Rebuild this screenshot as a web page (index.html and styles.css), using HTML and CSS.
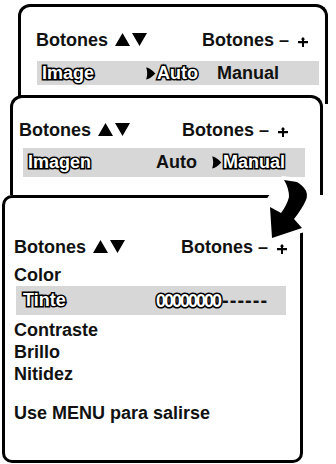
FILE: index.html
```html
<!DOCTYPE html>
<html lang="es">
<head>
    <meta charset="UTF-8">
    <meta name="viewport" content="width=device-width, initial-scale=1.0">
    <title>Menu de imagen</title>
    <link rel="stylesheet" href="styles.css">
</head>
<body>
    <div class="canvas">
        <!-- first screen -->
        <div class="panel panel-1">
            <div class="heading">
                <span>Botones <svg class="tri" viewBox="0 0 32 13"><path d="M7.5 0 L15 13 L0 13 Z M17 0 L32 0 L24.5 13 Z"/></svg></span>
                <span>Botones – <svg class="adj" viewBox="0 0 10 10"><path d="M5 0 L7.3 2.6 L6 2.6 L6 4 L10 4 L10 6.2 L6 6.2 L6 10 L4 10 L4 6.2 L0 6.2 L0 4 L4 4 L4 2.6 L2.7 2.6 Z"/></svg></span>
            </div>
            <div class="bar bar-1">
                <span class="sel">Image</span>
                <span><svg class="ptr" viewBox="0 0 10 12"><path d="M1 0.5 Q4 0.5 9.5 6 Q4 11.5 1 11.5 Q3 6 1 0.5 Z"/></svg><span class="sel">Auto</span></span>
                <span>Manual</span>
            </div>
        </div>

        <!-- second screen -->
        <div class="panel panel-2">
            <div class="heading">
                <span>Botones <svg class="tri" viewBox="0 0 32 13"><path d="M7.5 0 L15 13 L0 13 Z M17 0 L32 0 L24.5 13 Z"/></svg></span>
                <span>Botones – <svg class="adj" viewBox="0 0 10 10"><path d="M5 0 L7.3 2.6 L6 2.6 L6 4 L10 4 L10 6.2 L6 6.2 L6 10 L4 10 L4 6.2 L0 6.2 L0 4 L4 4 L4 2.6 L2.7 2.6 Z"/></svg></span>
            </div>
            <div class="bar bar-2">
                <span class="sel">Imagen</span>
                <span>Auto</span>
                <span><svg class="ptr" viewBox="0 0 10 12"><path d="M1 0.5 Q4 0.5 9.5 6 Q4 11.5 1 11.5 Q3 6 1 0.5 Z"/></svg><span class="sel">Manual</span></span>
            </div>
        </div>

        <!-- third screen -->
        <div class="panel panel-3">
            <div class="heading heading-3">
                <span>Botones <svg class="tri" viewBox="0 0 32 13"><path d="M7.5 0 L15 13 L0 13 Z M17 0 L32 0 L24.5 13 Z"/></svg></span>
                <span>Botones – <svg class="adj" viewBox="0 0 10 10"><path d="M5 0 L7.3 2.6 L6 2.6 L6 4 L10 4 L10 6.2 L6 6.2 L6 10 L4 10 L4 6.2 L0 6.2 L0 4 L4 4 L4 2.6 L2.7 2.6 Z"/></svg></span>
            </div>
            <div class="item">Color</div>
            <div class="bar bar-3">
                <span class="sel">Tinte</span>
                <span class="level"><span class="sel fill">00000000</span><span class="rest">------</span></span>
            </div>
            <div class="item item-first">Contraste</div>
            <div class="item">Brillo</div>
            <div class="item">Nitidez</div>
            <div class="item item-exit">Use MENU para salirse</div>
        </div>

        <svg class="arrow" viewBox="260 176 56 66">
            <polygon fill="#fff" points="270,194 282,176 299,178 312,192 309,231 270,241 266,200"/>
            <path d="M284 180 L297 182 Q310 190 306 200 Q302 209 294 219 L302 228 L272 238 L270 207 L281 213 Q287 205 289 197 Q289 188 284 180 Z"/>
        </svg>
    </div>
</body>
</html>
```

FILE: styles.css
```css
* {
    box-sizing: border-box;
}

body {
    margin: 0;
    background: #fff;
    font-family: 'Liberation Sans', Arial, sans-serif;
    font-weight: bold;
    font-size: 18px;
    color: #111;
}

.canvas {
    position: relative;
    width: 336px;
    height: 464px;
    overflow: hidden;
}

.panel {
    position: absolute;
    background: #fff;
    border: 3px solid #000;
}

.panel-1 {
    left: 18px;
    top: 4px;
    width: 310px;
    height: 100px;
    border-bottom: none;
    border-radius: 12px 12px 0 0;
    padding: 22px 17px 0 15px;
}

.panel-2 {
    left: 10px;
    top: 95px;
    width: 313px;
    height: 100px;
    border-bottom: none;
    border-radius: 12px 12px 0 0;
    padding: 21px 32px 0 6px;
}

.panel-3 {
    left: 2px;
    top: 195px;
    width: 301px;
    height: 268px;
    border-radius: 10px;
    padding: 38px 13px 0 9px;
}

.heading {
    display: flex;
    justify-content: space-between;
    line-height: 22px;
}

.tri {
    width: 32px;
    height: 13px;
    margin-left: 2px;
    vertical-align: 0;
}

.adj {
    width: 10px;
    height: 10px;
    margin-left: 4px;
    vertical-align: -1px;
}

.bar {
    display: grid;
    background: #d7d7d7;
    white-space: nowrap;
}

.bar-1 {
    margin: 10px -11px 0 1px;
    height: 24px;
    line-height: 24px;
    padding-left: 5px;
    grid-template-columns: 103px 72px auto;
}

.bar-2 {
    margin: 7px -17px 0 4px;
    height: 29px;
    line-height: 29px;
    padding-left: 5px;
    grid-template-columns: 128px 55px auto;
}

.bar-3 {
    margin: 0 1px 0 2px;
    height: 29px;
    line-height: 29px;
    padding-left: 7px;
    grid-template-columns: 133px auto;
}

.sel {
    color: #fff;
    -webkit-text-stroke: 3px #000;
    paint-order: stroke fill;
}

.ptr {
    width: 11px;
    height: 13px;
    margin-right: 1px;
    vertical-align: -1px;
}

.fill {
    letter-spacing: -2px;
}

.rest {
    font-size: 20px;
    letter-spacing: 1px;
    margin-left: 2px;
}

.heading-3 {
    margin-bottom: 6px;
}

.item {
    line-height: 22px;
}

.item-first {
    margin-top: 4px;
}

.item-exit {
    margin-top: 17px;
}

.arrow {
    position: absolute;
    left: 260px;
    top: 176px;
    width: 56px;
    height: 66px;
}
```
